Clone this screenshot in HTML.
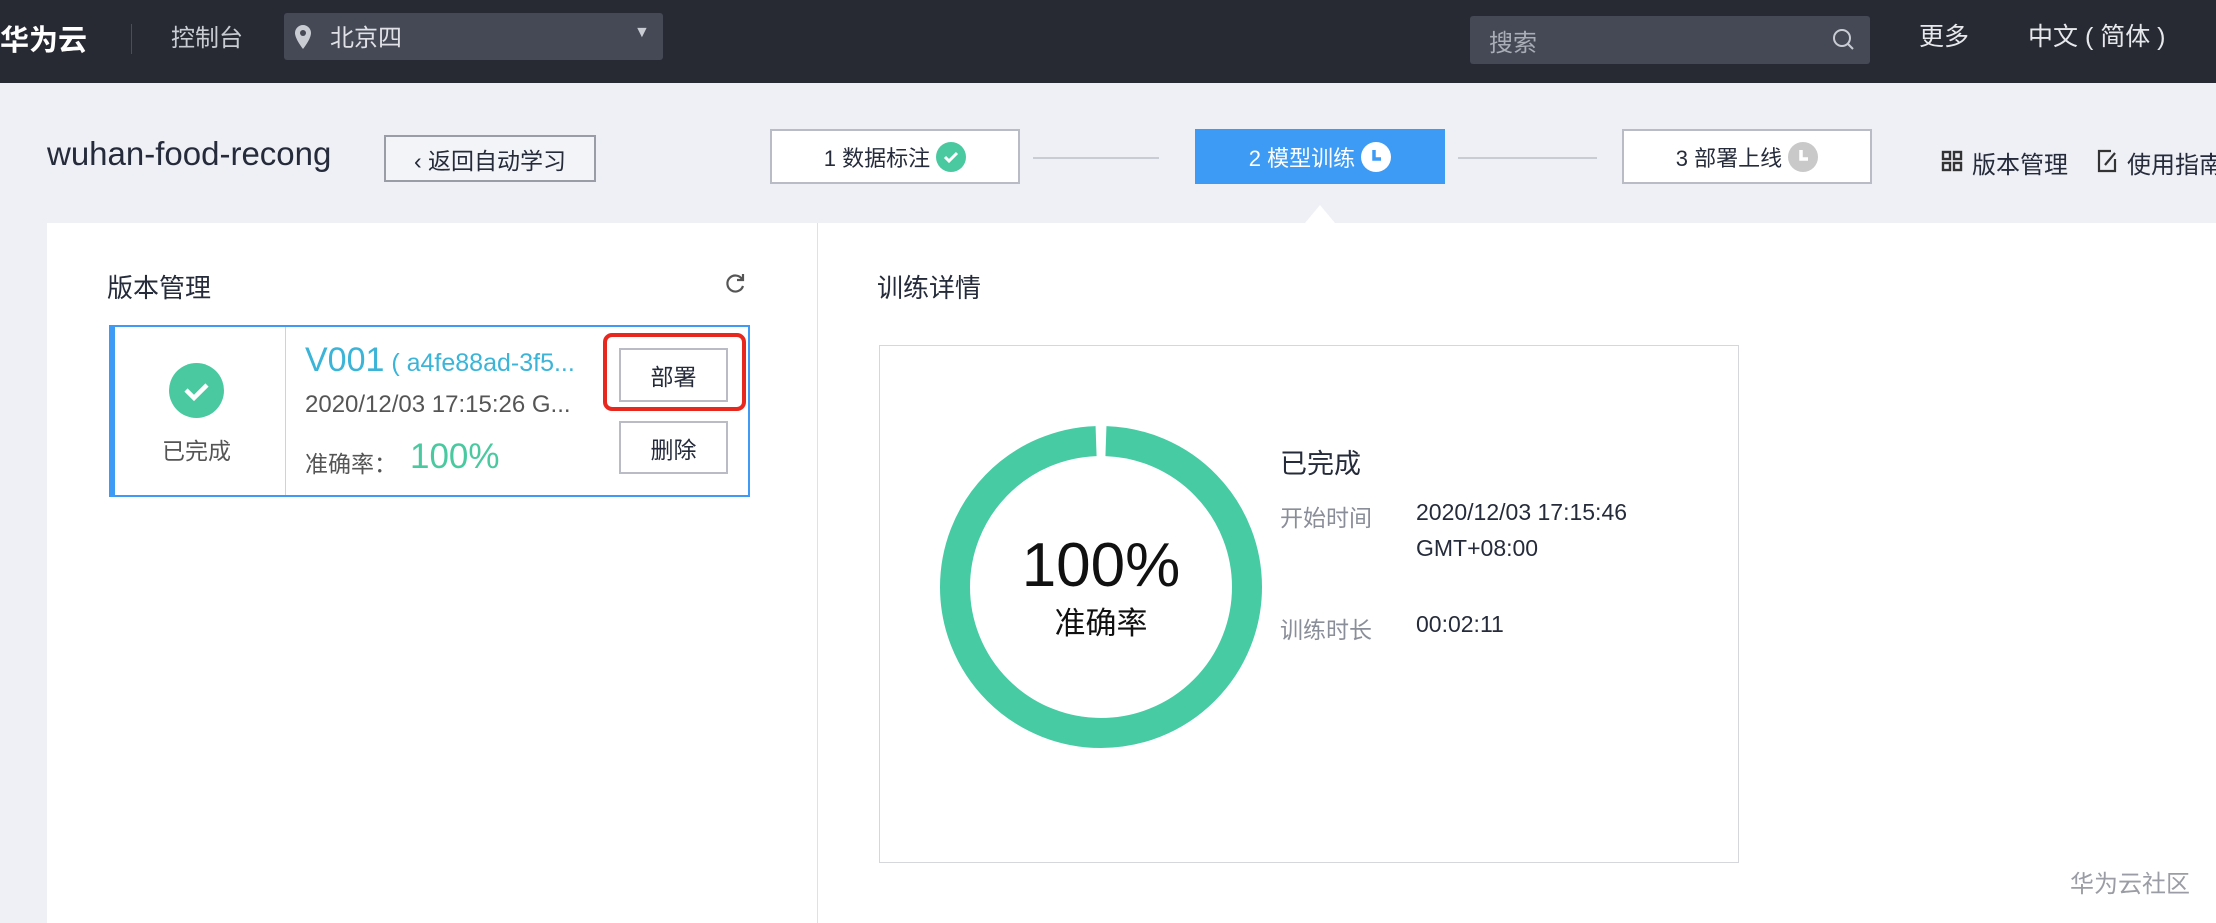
<!DOCTYPE html>
<html><head><meta charset="utf-8"><style>
*{margin:0;padding:0;box-sizing:border-box}
body{width:2216px;height:918px;overflow:hidden;background:#eef0f5;font-family:"Liberation Sans","Noto Sans CJK SC",sans-serif;position:relative;color:#252b3a}
.a{position:absolute;white-space:nowrap}
.hdr{position:absolute;left:0;top:0;width:2216px;height:83px;background:#272a33}
.btn{position:absolute;background:#fff;border:2px solid #b9bcc4;display:flex;align-items:center;justify-content:center;font-size:22px;color:#252b3a}
</style></head><body>
<div class="hdr"></div>
<div class="a" style="left:0;top:17px;font-size:29px;color:#fff;font-weight:bold">华为云</div>
<div class="a" style="left:131px;top:24px;width:1px;height:30px;background:#4a4e58"></div>
<div class="a" style="left:171px;top:18px;font-size:24px;color:#c9ccd3">控制台</div>
<div class="a" style="left:284px;top:13px;width:379px;height:47px;background:#454955;border-radius:3px"></div>
<svg class="a" style="left:294px;top:24px" width="18" height="26" viewBox="0 0 18 26"><path d="M9 1a8 8 0 0 0-8 8c0 6 8 16 8 16s8-10 8-16a8 8 0 0 0-8-8z" fill="#c9ccd3"/><circle cx="9" cy="9" r="3" fill="#454955"/></svg>
<div class="a" style="left:330px;top:18px;font-size:24px;color:#dfe1e6">北京四</div>
<div class="a" style="left:634px;top:24px;font-size:16px;color:#c9ccd3">▼</div>
<div class="a" style="left:1470px;top:16px;width:400px;height:48px;background:#454955;border-radius:3px"></div>
<div class="a" style="left:1489px;top:23px;font-size:24px;color:#a9adb6">搜索</div>
<svg class="a" style="left:1832px;top:28px" width="24" height="24" viewBox="0 0 24 24"><circle cx="10" cy="10" r="8" stroke="#c9ccd3" stroke-width="2" fill="none"/><path d="M16 16l5 5" stroke="#c9ccd3" stroke-width="2"/></svg>
<div class="a" style="left:1919px;top:17px;font-size:25px;color:#e6e8ec">更多</div>
<div class="a" style="left:2028px;top:17px;font-size:25px;color:#e6e8ec">中文 ( 简体 )</div>

<div class="a" style="left:47px;top:135px;font-size:33px;color:#252b3a">wuhan-food-recong</div>
<div class="btn" style="left:384px;top:135px;width:212px;height:47px;border-color:#9a9da5;background:#f3f4f7;font-size:23px">‹&nbsp;返回自动学习</div>

<div class="a" style="left:1033px;top:157px;width:126px;height:2px;background:#c9ccd3"></div>
<div class="a" style="left:1458px;top:157px;width:139px;height:2px;background:#c9ccd3"></div>
<div class="btn" style="left:770px;top:129px;width:250px;height:55px;border-color:#b9bcc4">1 数据标注&nbsp;<svg width="30" height="30" viewBox="0 0 30 30"><circle cx="15" cy="15" r="15" fill="#4ac9a0"/><path d="M9 15l4 4 8-8" stroke="#fff" stroke-width="3" fill="none"/></svg></div>
<div class="btn" style="left:1195px;top:129px;width:250px;height:55px;border:none;background:#3e9bf5;color:#fff">2 模型训练&nbsp;<svg width="30" height="30" viewBox="0 0 30 30"><circle cx="15" cy="15" r="15" fill="#fff"/><path d="M13 8v9h7" stroke="#3e9bf5" stroke-width="3.5" fill="none"/></svg></div>
<div class="btn" style="left:1622px;top:129px;width:250px;height:55px">3 部署上线&nbsp;<svg width="30" height="30" viewBox="0 0 30 30"><circle cx="15" cy="15" r="15" fill="#c9c9c9"/><path d="M13 8v9h7" stroke="#fff" stroke-width="3.5" fill="none"/></svg></div>
<svg class="a" style="left:1941px;top:150px" width="22" height="22" viewBox="0 0 22 22" fill="none" stroke="#333" stroke-width="2.4"><rect x="2" y="2" width="7" height="7"/><rect x="13" y="2" width="7" height="7"/><rect x="2" y="13" width="7" height="7"/><rect x="13" y="13" width="7" height="7"/></svg>
<div class="a" style="left:1972px;top:145px;font-size:24px;color:#252b3a">版本管理</div>
<svg class="a" style="left:2097px;top:149px" width="22" height="24" viewBox="0 0 22 24" fill="none" stroke="#333" stroke-width="2.2"><path d="M14 2H2v20h16V10"/><path d="M8 16l10-12"/></svg>
<div class="a" style="left:2127px;top:145px;font-size:24px;color:#252b3a">使用指南</div>

<div class="a" style="left:47px;top:223px;width:770px;height:700px;background:#fff"></div>
<div class="a" style="left:818px;top:223px;width:1398px;height:700px;background:#fff"></div>
<div class="a" style="left:817px;top:223px;width:1px;height:700px;background:#dfe1e6"></div>
<div class="a" style="left:1305px;top:205px;width:0;height:0;border-left:15px solid transparent;border-right:15px solid transparent;border-bottom:18px solid #fff"></div>

<div class="a" style="left:107px;top:268px;font-size:26px">版本管理</div>
<svg class="a" style="left:724px;top:272px" width="22" height="22" viewBox="0 0 22 22"><path d="M18 7A8 8 0 1 0 19 14" stroke="#555" stroke-width="2.2" fill="none"/><path d="M19 2v6h-6" fill="none" stroke="#555" stroke-width="2.2"/></svg>

<div class="a" style="left:109px;top:325px;width:641px;height:172px;border:2px solid #3e9bf5;border-left:6px solid #3e9bf5;background:#fff"></div>
<div class="a" style="left:285px;top:327px;width:1px;height:168px;background:#cfd2d8"></div>
<svg class="a" style="left:169px;top:363px" width="55" height="55" viewBox="0 0 55 55"><circle cx="27.5" cy="27.5" r="27.5" fill="#4ac9a0"/><path d="M17 27l8 8 13-13" stroke="#fff" stroke-width="4.5" fill="none"/></svg>
<div class="a" style="left:162px;top:432px;font-size:23px;color:#555">已完成</div>
<div class="a" style="left:305px;top:341px;font-size:34px;color:#3bb4d8">V001<span style="font-size:25px"> ( a4fe88ad-3f5...</span></div>
<div class="a" style="left:305px;top:391px;font-size:24px;color:#555">2020/12/03 17:15:26 G...</div>
<div class="a" style="left:305px;top:445px;font-size:23px;color:#555">准确率：</div>
<div class="a" style="left:410px;top:437px;font-size:35px;color:#4ac9a0">100%</div>
<div class="a" style="left:603px;top:333px;width:143px;height:78px;border:4px solid #e8281f;border-radius:9px"></div>
<div class="btn" style="left:619px;top:348px;width:109px;height:54px;font-size:23px">部署</div>
<div class="btn" style="left:619px;top:421px;width:109px;height:53px;font-size:23px">删除</div>

<div class="a" style="left:877px;top:268px;font-size:26px">训练详情</div>
<div class="a" style="left:879px;top:345px;width:860px;height:518px;border:1px solid #d5d7dc"></div>
<svg class="a" style="left:940px;top:426px" width="322" height="322" viewBox="0 0 322 322"><circle cx="161" cy="161" r="146" stroke="#46cba3" stroke-width="30" fill="none" stroke-dasharray="907 10" stroke-dashoffset="-5" transform="rotate(-90 161 161)"/></svg>
<div class="a" style="left:1001px;top:530px;width:200px;text-align:center;font-size:62px;color:#111">100%</div>
<div class="a" style="left:1001px;top:598px;width:200px;text-align:center;font-size:31px;color:#111">准确率</div>
<div class="a" style="left:1280px;top:442px;font-size:27px;color:#252b3a">已完成</div>
<div class="a" style="left:1280px;top:499px;font-size:23px;color:#8a8e99">开始时间</div>
<div class="a" style="left:1416px;top:499px;font-size:23px;color:#252b3a">2020/12/03 17:15:46</div>
<div class="a" style="left:1416px;top:535px;font-size:23px;color:#252b3a">GMT+08:00</div>
<div class="a" style="left:1280px;top:611px;font-size:23px;color:#8a8e99">训练时长</div>
<div class="a" style="left:1416px;top:611px;font-size:23px;color:#252b3a">00:02:11</div>
<div class="a" style="left:2070px;top:864px;font-size:24px;color:#9a9da5">华为云社区</div>
</body></html>
